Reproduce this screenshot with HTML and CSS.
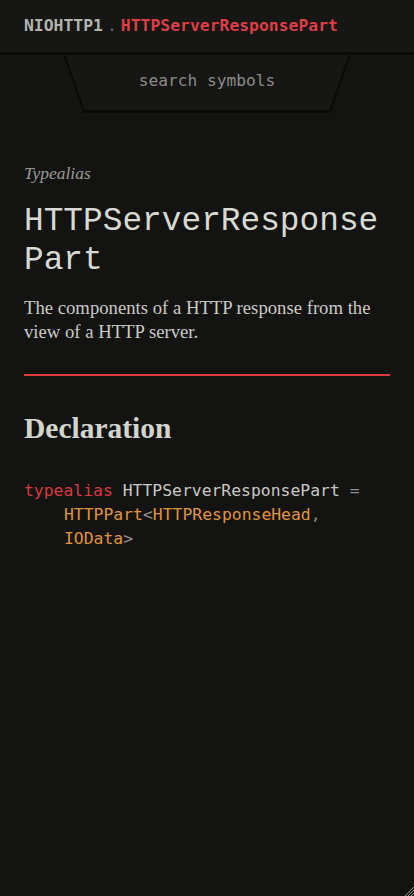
FILE: index.html
```html
<!DOCTYPE html>
<html lang="en">
<head>
<meta charset="utf-8">
<title>HTTPServerResponsePart</title>
<link rel="stylesheet" href="styles.css">
</head>
<body>
<header class="topbar">
  <nav class="crumbs">
    <span class="crumb-module">NIOHTTP1</span>
    <span class="crumb-sep">.</span>
    <span class="crumb-current">HTTPServerResponsePart</span>
  </nav>
</header>
<div class="search">
  <div class="search-inner">
    <span class="search-label">search symbols</span>
  </div>
</div>
<main class="content">
  <p class="kind">Typealias</p>
  <h1 class="title">HTTPServerResponsePart</h1>
  <p class="summary">The components of a HTTP response from the view of a HTTP server.</p>
  <hr class="rule">
  <h2 class="section-title">Declaration</h2>
  <pre class="decl"><span class="line"><span class="kw">typealias</span> <span class="id">HTTPServerResponsePart</span> <span class="pn">=</span></span><span class="line indent"><span class="ty">HTTPPart</span><span class="pn">&lt;</span><span class="ty">HTTPResponseHead</span><span class="pn">,</span></span><span class="line indent"><span class="ty">IOData</span><span class="pn">&gt;</span></span></pre>
</main>
<svg class="grip" width="10" height="10" viewBox="0 0 10 10"><path d="M10 1 L1 10 M10 4 L4 10 M10 7 L7 10" stroke="#9a9a94" stroke-width="1"/></svg>
</body>
</html>
```
FILE: styles.css
```css
html, body {
  margin: 0;
  padding: 0;
}
body {
  background: #131311;
  min-height: 896px;
  color: #c9c9c3;
  font-family: "Liberation Serif", serif;
}
.topbar {
  height: 52px;
  background: #161614;
  border-bottom: 3px solid #0b0b0a;
  display: flex;
  align-items: center;
  padding: 0 24px;
  box-sizing: content-box;
}
.crumbs {
  font-family: "DejaVu Sans Mono", monospace;
  font-size: 16.4px;
  font-weight: bold;
  display: flex;
  gap: 4px;
  white-space: nowrap;
  padding-bottom: 2px;
}
.crumb-module { color: #b4b4ae; }
.crumb-sep { color: #6e6e6a; font-weight: normal; }
.crumb-current { color: #dd3f45; }
.search {
  width: 287px;
  height: 58px;
  margin: 0 auto;
  background: #0a0a09;
  clip-path: polygon(0 0, 100% 0, calc(100% - 20px) 100%, 20px 100%);
}
.search-inner {
  height: 55px;
  background: #161614;
  clip-path: polygon(2px 0, calc(100% - 2px) 0, calc(100% - 21px) 100%, 21px 100%);
  display: flex;
  align-items: center;
  justify-content: center;
}
.search-label {
  font-family: "DejaVu Sans Mono", monospace;
  font-size: 16.2px;
  color: #8b8b86;
  padding-bottom: 4px;
}
.content {
  padding: 0 24px;
}
.kind {
  margin: 50px 0 0;
  font-style: italic;
  font-size: 17.5px;
  color: #9b9b96;
  line-height: 20px;
}
.title {
  margin: 19px 0 0;
  font-family: "Liberation Mono", monospace;
  font-weight: normal;
  font-size: 32.8px;
  line-height: 39px;
  color: #d9d9d3;
  word-break: break-all;
}
.summary {
  margin: 16px 0 0;
  font-size: 18.7px;
  line-height: 24px;
  color: #cacac4;
}
.rule {
  margin: 30px 0 0;
  border: 0;
  height: 2px;
  background: #e2393d;
}
.section-title {
  margin: 36px 0 0;
  font-size: 29.5px;
  line-height: 32px;
  font-weight: bold;
  color: #d4d4ce;
}
.decl {
  margin: 35px 0 0;
  font-family: "DejaVu Sans Mono", monospace;
  font-size: 16.4px;
  line-height: 24px;
  white-space: pre;
}
.line { display: block; }
.indent { padding-left: 40px; }
.kw { color: #d8393f; }
.id { color: #c9c9c3; }
.ty { color: #e0943a; }
.pn { color: #8e8e89; }
.grip {
  position: fixed;
  right: 0;
  bottom: 0;
}
```
